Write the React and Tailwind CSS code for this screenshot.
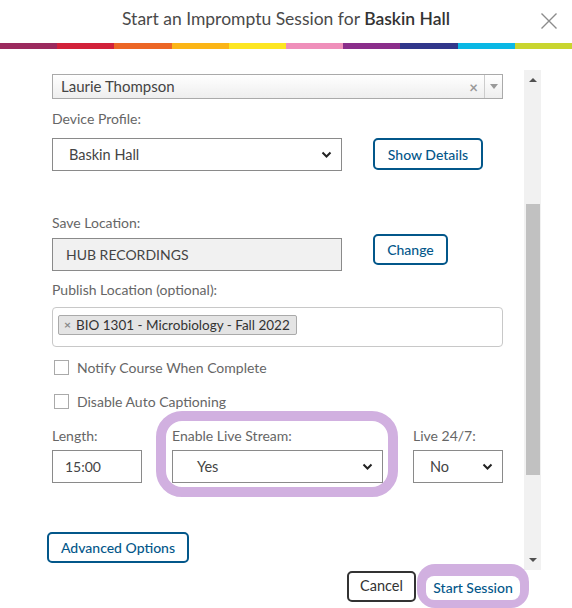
import React from 'react';

const stripe = ['#9b2a5e', '#d2213a', '#ec6626', '#fbb516', '#fde622', '#ef8fba', '#8a2e8a', '#31378b', '#0ab8e5', '#c9d52f'];

function Chevron() {
    return (
        <svg width="11" height="7" viewBox="0 0 11 7" className="shrink-0">
            <path d="M1.5 1.5l4 4 4-4" fill="none" stroke="#222" strokeWidth="2" />
        </svg>
    );
}

function SelectBox({ value, className = '', textPad = 'pl-[16px]' }) {
    return (
        <div className={`flex items-center justify-between h-[33px] border border-[#8a8a8a] bg-white pr-[9px] ${textPad} ${className}`}>
            <span className="text-[14.5px] text-[#444]">{value}</span>
            <Chevron />
        </div>
    );
}

function OutlineButton({ children, className = '' }) {
    return (
        <button className={`flex items-center justify-center border-2 border-[#03578a] rounded-[5px] text-[14px] font-medium text-[#03578a] bg-white ${className}`}>
            {children}
        </button>
    );
}

function Check({ label }) {
    return (
        <div className="flex items-center h-[20px] pl-[2px]">
            <div className="w-[15px] h-[15px] border border-[#aaa] bg-white" />
            <span className="ml-[8px] text-[14px] text-[#666]">{label}</span>
        </div>
    );
}

export default function App() {
    return (
        <div className="w-[572px] h-[608px] bg-white overflow-hidden relative" style={{ fontFamily: 'Lato, "Open Sans", sans-serif' }}>
            {/* header */}
            <div className="h-[43px] flex items-center justify-center relative">
                <h1 className="text-[17.5px] text-[#4a4a4a] pb-[5px]">
                    Start an Impromptu Session for <span className="font-semibold text-[#333]">Baskin Hall</span>
                </h1>
                <svg className="absolute left-[541px] top-[13px]" width="16" height="16" viewBox="0 0 16 16">
                    <path d="M0.5 0.5l15 15M15.5 0.5l-15 15" stroke="#8c8c8c" strokeWidth="1.4" />
                </svg>
            </div>
            <div className="flex h-[6px]">
                {stripe.map((c) => (
                    <div key={c} className="flex-1" style={{ backgroundColor: c }} />
                ))}
            </div>

            {/* scrolling body */}
            <div className="flex h-[515px]">
                <div className="w-[451px] ml-[52px] pt-[25px]">
                    {/* presenter */}
                    <div className="flex items-center h-[25px] border border-[#aaa] bg-gradient-to-b from-white to-[#eee]">
                        <span className="flex-1 pl-[8px] text-[15px] text-[#444]">Laurie Thompson</span>
                        <span className="text-[15px] font-bold text-[#999] leading-none pr-[6px] pt-[2px]">×</span>
                        <div className="w-[18px] h-full border-l border-[#ccc] flex items-center justify-center">
                            <svg width="8" height="5" viewBox="0 0 8 5"><path d="M0 0h8L4 5z" fill="#999" /></svg>
                        </div>
                    </div>

                    <div className="mt-[10px] h-[20px] text-[14px] text-[#666] leading-[20px]">Device Profile:</div>
                    <div className="mt-[9px] flex items-start">
                        <SelectBox value="Baskin Hall" className="w-[290px]" />
                        <OutlineButton className="ml-[31px] w-[110px] h-[32px]">Show Details</OutlineButton>
                    </div>

                    <div className="mt-[42px] h-[20px] text-[14px] text-[#666] leading-[20px]">Save Location:</div>
                    <div className="flex items-start">
                        <div className="mt-[5px] w-[290px] h-[33px] border border-[#8a8a8a] bg-[#f1f1f1] flex items-center pl-[13px] text-[14px] text-[#444]">
                            HUB RECORDINGS
                        </div>
                        <OutlineButton className="ml-[31px] mt-[1px] w-[75px] h-[31px]">Change</OutlineButton>
                    </div>

                    <div className="mt-[9px] h-[20px] text-[14px] text-[#666] leading-[20px]">Publish Location (optional):</div>
                    <div className="mt-[7px] h-[40px] border border-[#c8c8c8] rounded-[4px] pl-[5px] pt-[3px]">
                        <div className="inline-flex items-center h-[20px] border border-[#aaa] bg-[#e4e4e4] rounded-[2px] pl-[5px] pr-[6px]">
                            <span className="text-[12px] font-bold text-[#888] leading-none">×</span>
                            <span className="ml-[5px] text-[13.5px] text-[#333]">BIO 1301 - Microbiology - Fall 2022</span>
                        </div>
                    </div>

                    <div className="mt-[10px]">
                        <Check label="Notify Course When Complete" />
                    </div>
                    <div className="mt-[14px]">
                        <Check label="Disable Auto Captioning" />
                    </div>

                    <div className="flex items-start">
                        <div className="w-[90px] pt-[15px]">
                            <div className="h-[20px] text-[14px] text-[#666] leading-[20px]">Length:</div>
                            <div className="mt-[4px] h-[33px] border border-[#8a8a8a] flex items-center pl-[12px] text-[14px] text-[#444]">15:00</div>
                        </div>
                        <div className="ml-[14px] w-[242px] border-[10px] border-[#d1b0e0] rounded-[26px] pl-[6px] pr-[5px] pt-[5px] pb-[4px]">
                            <div className="h-[20px] text-[14px] text-[#666] leading-[20px]">Enable Live Stream:</div>
                            <SelectBox value="Yes" className="mt-[4px]" textPad="pl-[24px]" />
                        </div>
                        <div className="ml-[15px] w-[90px] pt-[15px]">
                            <div className="h-[20px] text-[14px] text-[#666] leading-[20px]">Live 24/7:</div>
                            <SelectBox value="No" className="mt-[4px]" textPad="pl-[16px]" />
                        </div>
                    </div>

                    <OutlineButton className="mt-[35px] -ml-[5px] w-[142px] h-[31px]">Advanced Options</OutlineButton>
                </div>

                {/* scrollbar */}
                <div className="ml-[21px] mt-[21px] w-[17px] h-[500px] bg-[#f1f1f1] flex flex-col items-center shrink-0">
                    <div className="h-[20px] flex items-center justify-center">
                        <svg width="8" height="4" viewBox="0 0 8 4"><path d="M0 4h8L4 0z" fill="#505050" /></svg>
                    </div>
                    <div className="mt-[114px] w-[14px] h-[271px] bg-[#c1c1c1]" />
                    <div className="mt-auto h-[20px] flex items-center justify-center">
                        <svg width="8" height="4" viewBox="0 0 8 4"><path d="M0 0h8L4 4z" fill="#505050" /></svg>
                    </div>
                </div>
            </div>

            {/* footer */}
            <div className="relative flex items-center justify-end pr-[43px] h-[44px]">
                <button className="w-[69px] h-[31px] border-2 border-[#333] rounded-[5px] bg-white text-[14.5px] text-[#333]">Cancel</button>
                <div className="ml-[1px] h-[44px] rounded-[18px] bg-[#d1b0e0] p-[9px] pt-[11px] pb-[9px]">
                    <button className="w-[94px] h-[24px] rounded-[8px] bg-white text-[14px] font-medium text-[#03578a]">Start Session</button>
                </div>
            </div>
        </div>
    );
}
